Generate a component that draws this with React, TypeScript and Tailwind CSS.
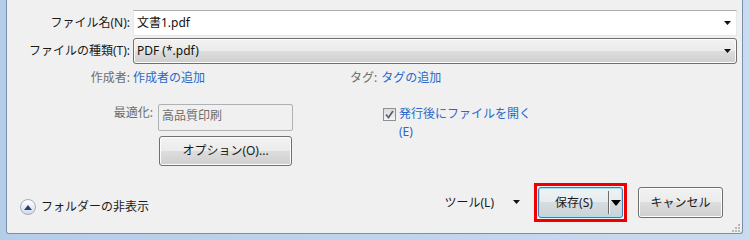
import React from "react";

const btn =
  "flex items-center justify-center rounded-[3px] border border-[#707070] bg-[linear-gradient(to_bottom,#f2f2f2_0%,#ebebeb_50%,#dddddd_50%,#cfcfcf_100%)] shadow-[inset_0_0_0_1px_#fcfcfc] text-[12px] text-[#1a1a1a]";

function DropArrow() {
  return (
    <svg width="8" height="5" viewBox="0 0 8 5" className="shrink-0">
      <path d="M0 0H7L3.5 4Z" fill="#111" />
    </svg>
  );
}

export default function App() {
  return (
    <div className="w-[750px] h-[240px] overflow-hidden bg-[linear-gradient(to_right,#b4cde9,#c9dbf0)] pl-[6px] pr-[7px] font-['Noto_Sans','Noto_Sans_CJK_JP',sans-serif]">
      <div className="relative h-[234px] rounded-b-[3px] border-x border-b border-[#7d8fa6] bg-[#f0f0f0]">
        <div className="pt-[10px]">
          {/* file name */}
          <div className="flex h-[26px] items-center">
            <div className="w-[123px] text-right text-[12px] leading-[16px] text-[#1a1a1a]">ファイル名(N):</div>
            <div className="ml-[3px] flex h-[26px] w-[604px] items-center border border-[#e3e9ef] border-t-[#abadb3] bg-white pl-[3px] pr-[4px]">
              <span className="flex-1 text-[12px] leading-[16px] text-[#111]">文書1.pdf</span>
              <DropArrow />
            </div>
          </div>
          {/* file type */}
          <div className="mt-[2px] flex h-[26px] items-center">
            <div className="w-[123px] text-right text-[12px] leading-[16px] text-[#1a1a1a]">ファイルの種類(T):</div>
            <div className={`ml-[3px] h-[26px] w-[604px] !justify-start pl-[3px] pr-[4px] ${btn}`}>
              <span className="flex-1 text-[12px] leading-[16px] text-[#111]">PDF (*.pdf)</span>
              <DropArrow />
            </div>
          </div>
          {/* meta */}
          <div className="mt-[6px] flex h-[16px] items-center text-[12px] leading-[16px]">
            <div className="flex w-[343px]">
              <div className="w-[123px] text-right text-[#6d6d6d]">作成者:</div>
              <div className="ml-[3px] text-[#2a68c9]">作成者の追加</div>
            </div>
            <div className="text-[#6d6d6d]">タグ:</div>
            <div className="ml-[4px] text-[#2a68c9]">タグの追加</div>
          </div>
          {/* options */}
          <div className="mt-[18px] flex">
            <div className="w-[146px] pt-[1px] text-right text-[12px] leading-[16px] text-[#6d6d6d]">最適化:</div>
            <div className="ml-[5px] flex flex-col">
              <div className="flex h-[27px] w-[135px] items-start rounded-[2px] border border-[#adb2b5] bg-[#f0f0f0] pl-[3px] pt-[3px] text-[12px] leading-[16px] text-[#6d6d6d]">
                高品質印刷
              </div>
              <div className={`ml-[1px] mt-[5px] h-[30px] w-[133px] ${btn}`}>オプション(O)...</div>
            </div>
            <div className="ml-[90px] flex items-start">
              <div className="mt-[4px] flex h-[13px] w-[13px] items-center justify-center border border-[#8f8f8f] bg-[linear-gradient(to_bottom,#dcdcdc,#f4f4f4)]">
                <svg width="9" height="9" viewBox="0 0 9 9">
                  <path d="M1 4.5L3.5 7.5L8 1" fill="none" stroke="#5a6478" strokeWidth="1.8" />
                </svg>
              </div>
              <div className="ml-[3px] pt-[1px] text-[12px] leading-[18px] text-[#2a68c9]">
                <div>発行後にファイルを開く</div>
                <div>(E)</div>
              </div>
            </div>
          </div>
          {/* bottom */}
          <div className="mt-[17px] flex h-[39px] items-center pl-[13px] pr-[19px]">
            <div className="flex items-center self-start mt-[16px]">
              <div className="flex h-[16px] w-[16px] items-center justify-center rounded-full border border-[#a3acb8] bg-[linear-gradient(to_bottom,#ffffff,#d5dbe4)]">
                <svg width="8" height="5" viewBox="0 0 8 5">
                  <path d="M0 5H8L4 0Z" fill="#24407a" />
                </svg>
              </div>
              <span className="ml-[5px] text-[12px] leading-[16px] text-[#1a1a1a]">フォルダーの非表示</span>
            </div>
            <div className="ml-auto flex items-center">
              <span className="text-[12px] leading-[16px] text-[#1a1a1a]">ツール(L)</span>
              <div className="ml-[19px]">
                <DropArrow />
              </div>
              <div className="ml-[13px] border-[3px] border-[#ee0000] p-[1px]">
                <div className="flex h-[31px] w-[85px] rounded-[3px] border border-[#3c7fb1] bg-[linear-gradient(to_bottom,#eef3f5_0%,#e6ecef_50%,#d6dde1_50%,#cbd3d8_100%)] shadow-[inset_0_0_0_1px_#a6e3f7] text-[12px] text-[#1a1a1a]">
                  <div className="flex w-[69px] items-center justify-center pl-[1px]">保存(S)</div>
                  <div className="my-[3px] w-[2px] border-l border-r border-l-[#6b6b6b] border-r-[#f4f4f4]" />
                  <div className="flex flex-1 items-center justify-center">
                    <svg width="10" height="6" viewBox="0 0 10 6">
                      <path d="M0 0H10L5 6Z" fill="#000" />
                    </svg>
                  </div>
                </div>
              </div>
              <div className={`ml-[11px] h-[31px] w-[85px] ${btn}`}>キャンセル</div>
            </div>
          </div>
        </div>
        {/* resize grip */}
        <svg width="8" height="8" viewBox="0 0 8 8" className="absolute bottom-[1px] right-[2px]">
          <g fill="#b8b8b8">
            <rect x="6" y="0" width="2" height="2" />
            <rect x="3" y="3" width="2" height="2" />
            <rect x="6" y="3" width="2" height="2" />
            <rect x="0" y="6" width="2" height="2" />
            <rect x="3" y="6" width="2" height="2" />
            <rect x="6" y="6" width="2" height="2" />
          </g>
        </svg>
      </div>
    </div>
  );
}
